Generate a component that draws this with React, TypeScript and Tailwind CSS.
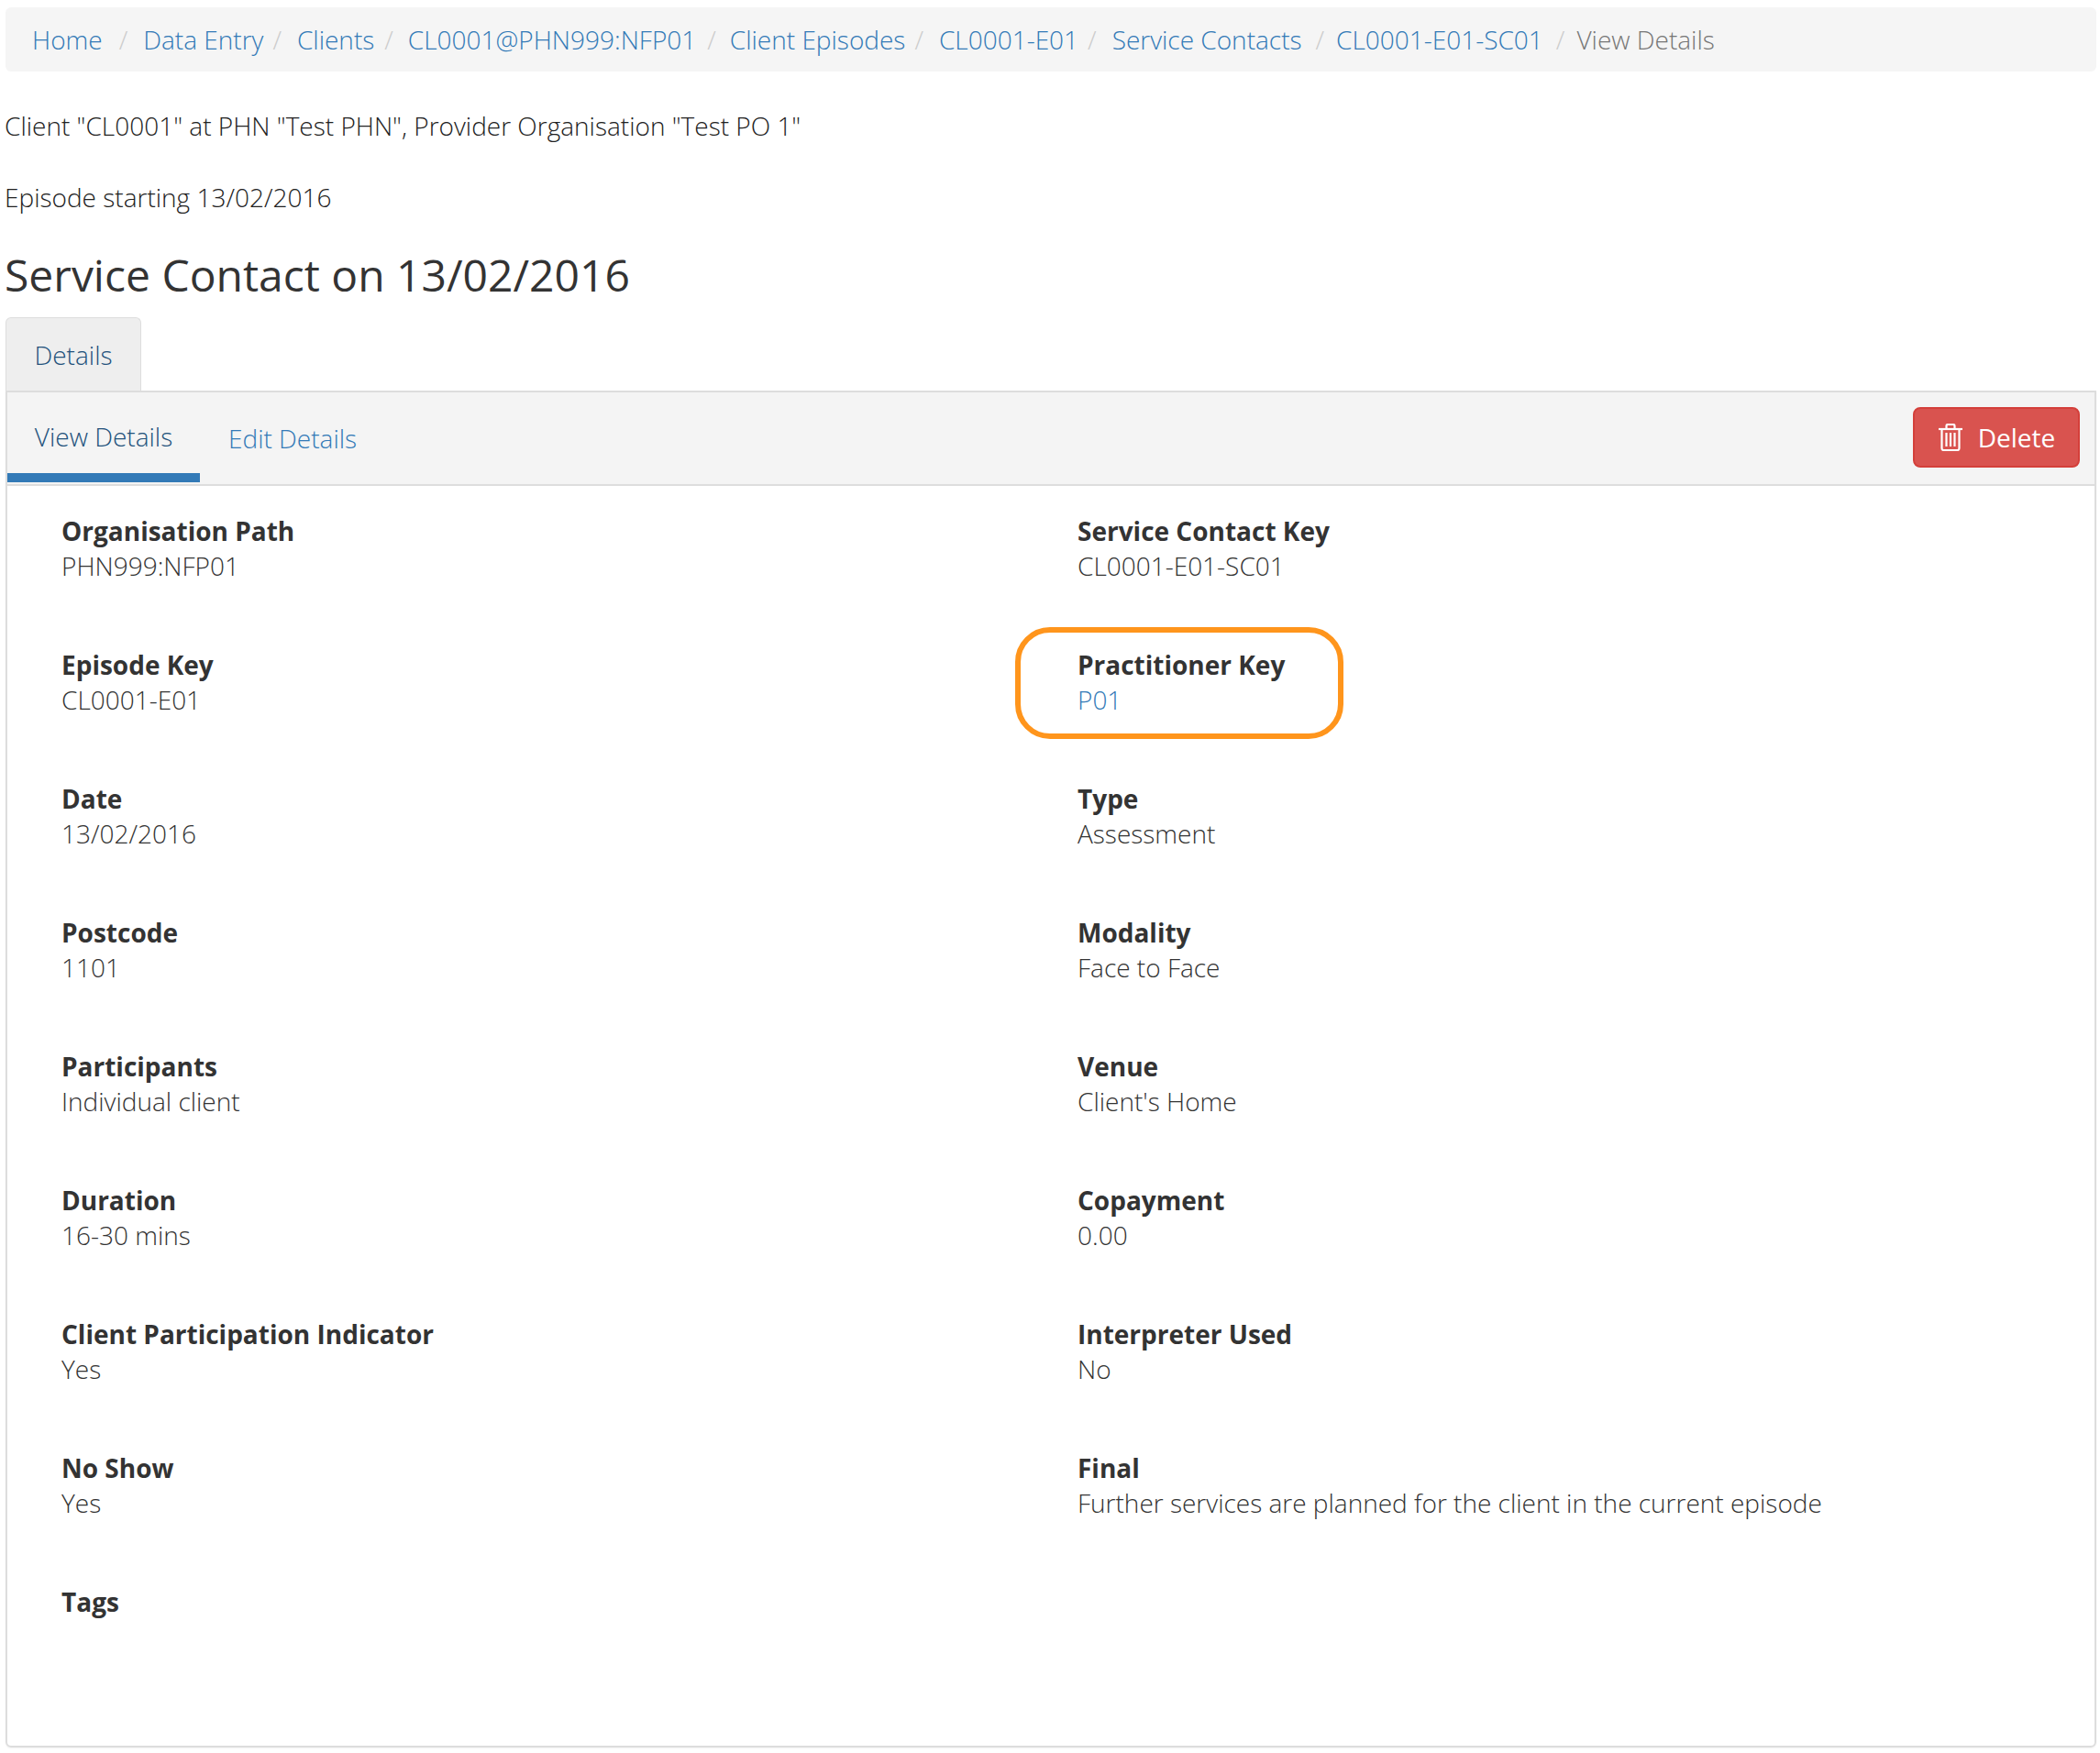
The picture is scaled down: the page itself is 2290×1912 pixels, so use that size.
const crumbs = [
  { text: "Home", sepClass: "pr-[17px] pl-[18px]" },
  { text: "Data Entry", sepClass: "pr-[17px] pl-[10px]" },
  { text: "Clients", sepClass: "pr-[16px] pl-[11px]" },
  { text: "CL0001@PHN999:NFP01", sepClass: "pr-[15px] pl-[12px]" },
  { text: "Client Episodes", sepClass: "pr-[17px] pl-[10px]" },
  { text: "CL0001-E01", sepClass: "pr-[17px] pl-[10px]" },
  { text: "Service Contacts", sepClass: "pr-[13px] pl-[15px]" },
  { text: "CL0001-E01-SC01", sepClass: "pr-[13px] pl-[14px]" },
];

const fields: { label: string; value?: string; link?: boolean }[] = [
  { label: "Organisation Path", value: "PHN999:NFP01" },
  { label: "Service Contact Key", value: "CL0001-E01-SC01" },
  { label: "Episode Key", value: "CL0001-E01" },
  { label: "Practitioner Key", value: "P01", link: true },
  { label: "Date", value: "13/02/2016" },
  { label: "Type", value: "Assessment" },
  { label: "Postcode", value: "1101" },
  { label: "Modality", value: "Face to Face" },
  { label: "Participants", value: "Individual client" },
  { label: "Venue", value: "Client's Home" },
  { label: "Duration", value: "16-30 mins" },
  { label: "Copayment", value: "0.00" },
  { label: "Client Participation Indicator", value: "Yes" },
  { label: "Interpreter Used", value: "No" },
  { label: "No Show", value: "Yes" },
  { label: "Final", value: "Further services are planned for the client in the current episode" },
  { label: "Tags" },
];

function TrashIcon() {
  return (
    <svg width="26" height="30" viewBox="0 0 26 30" fill="none" stroke="currentColor" strokeWidth="2.2">
      <path d="M0 6h26" />
      <path d="M8.500 5.500V2.500a1.500 1.500 0 0 1 1.500-1.500h6a1.500 1.500 0 0 1 1.500 1.500v3" />
      <path d="M3.500 6v21a2 2 0 0 0 2 2h15a2 2 0 0 0 2-2V6" />
      <path d="M8.500 10v15M13 10v15M17.500 10v15" />
    </svg>
  );
}

export default function App() {
  return (
    <div className="min-h-[1912px] bg-white pt-[8px] pr-[4px] pl-[6px] font-['Open_Sans',sans-serif] text-[28px] leading-[38px] font-light text-[#333]">
      <ol className="flex h-[70px] items-center rounded-[6px] bg-[#f5f5f5] pl-[29px]">
        {crumbs.map((crumb) => (
          <li key={crumb.text} className="flex items-center">
            <a className="text-[#337ab7]">{crumb.text}</a>
            <span className={`${crumb.sepClass} text-[#ccc]`}>/</span>
          </li>
        ))}
        <li className="text-[#777]">View Details</li>
      </ol>

      <p className="mt-[40px] -ml-[1px] text-[#222]">Client "CL0001" at PHN "Test PHN", Provider Organisation "Test PO 1"</p>
      <p className="mt-[40px] -ml-[1px] text-[#222]">Episode starting 13/02/2016</p>
      <h1 className="mt-[36px] -ml-[1px] text-[48px] leading-[60px] font-normal">Service Contact on 13/02/2016</h1>

      <div className="mt-[16px] flex">
        <div className="flex h-[80px] w-[148px] items-center justify-center rounded-t-[6px] border border-b-0 border-[#ddd] bg-[#eee] text-[#23527c]">
          Details
        </div>
      </div>

      <div className="relative h-[1480px] rounded-b-[6px] border-2 border-[#ddd] shadow-[0_1px_2px_rgba(0,0,0,0.05)]">
        <div className="flex h-[102px] items-stretch justify-between border-b-2 border-[#ddd] bg-[#f4f4f4]">
          <div className="flex">
            <div className="flex h-[98px] w-[210px] items-center justify-center border-b-[10px] border-[#337ab7] pt-[8px] text-[#23527c]">
              View Details
            </div>
            <a className="flex items-center px-[31px] text-[#337ab7]">Edit Details</a>
          </div>
          <button className="mt-[16px] mr-[16px] flex h-[66px] w-[182px] items-center justify-center gap-[17px] rounded-[8px] border-2 border-[#d43f3a] bg-[#d9534f] pl-[1px] font-normal text-white">
            <TrashIcon />
            Delete
          </button>
        </div>

        <div className="grid grid-cols-[1108px_1fr] pt-[30px] pl-[59px]">
          {fields.map((field) => (
            <div key={field.label} className="h-[146px]">
              <div className="font-bold">{field.label}</div>
              {field.value && (
                <div className={field.link ? "text-[#337ab7]" : ""}>{field.value}</div>
              )}
            </div>
          ))}
        </div>

        <div className="pointer-events-none absolute top-[256px] left-[1099px] h-[122px] w-[358px] rounded-[38px] border-[6px] border-[#ff951c]" />
      </div>
    </div>
  );
}
